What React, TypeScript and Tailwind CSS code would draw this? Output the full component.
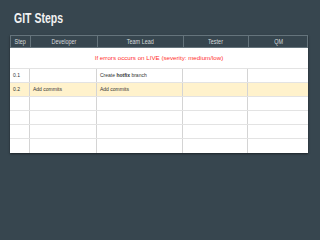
const cols = "grid grid-cols-[20px_67px_86px_65px_60px]";

const heads = ["Step", "Developer", "Team Lead", "Tester", "QM"];

type Row = { step?: string; dev?: React.ReactNode; lead?: React.ReactNode; hl?: boolean };

const rows: Row[] = [
  { step: "0.1", lead: <span>Create <b>hotfix</b> branch</span> },
  { step: "0.2", dev: "Add commits", lead: "Add commits", hl: true },
  {},
  {},
  {},
  {},
];

export default function App() {
  return (
    <div className="w-[320px] h-[240px] bg-[#37464f] overflow-hidden font-['Liberation_Sans',Arial,sans-serif]">
      <div className="pl-[14px] pt-[6px] h-[35px]">
        <h1 className="inline-block origin-left scale-x-[0.7] text-[15px] leading-[22px] font-bold text-[#f2f2f2]">
          GIT Steps
        </h1>
      </div>
      <div className="ml-[10px] w-[298px] shadow-[0_1px_2px_rgba(0,0,0,0.5)]">
        <div className={`${cols} h-[13px] border border-[#65747c] text-[#d6dbdd] text-[7px]`}>
          {heads.map((h, i) => (
            <div
              key={h}
              className={`flex items-center justify-center leading-none ${i < 4 ? "border-r border-[#65747c]" : ""}`}
            >
              <span className="inline-block scale-x-[0.78]">{h}</span>
            </div>
          ))}
        </div>
        <div className="bg-white">
          <div className="h-[21px] flex items-center justify-center text-[6.2px] text-[#ff2e2e] border-b border-[#e3e3e3]">
            <span>If errors occurs on LIVE (severity: medium/low)</span>
          </div>
          {rows.map((r, i) => (
            <div
              key={i}
              className={`${cols} h-[14px] text-[5px] text-[#333] ${i < rows.length - 1 ? "border-b border-[#e3e3e3]" : ""} ${r.hl ? "bg-[#fff2cc]" : ""}`}
            >
              <div className="flex items-center pl-[3px] border-r border-[#d4d4d4]">{r.step}</div>
              <div className="flex items-center pl-[3px] border-r border-[#d4d4d4]">{r.dev}</div>
              <div className="flex items-center pl-[3px] border-r border-[#d4d4d4]">{r.lead}</div>
              <div className="border-r border-[#d4d4d4]" />
              <div />
            </div>
          ))}
        </div>
      </div>
    </div>
  );
}
